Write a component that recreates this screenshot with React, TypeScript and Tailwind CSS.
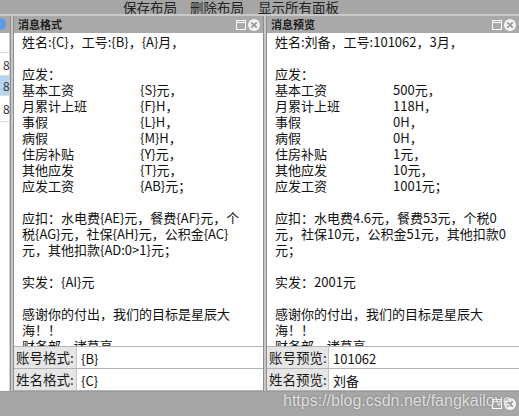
const FONT = "font-['Noto_Sans_CJK_SC','Noto_Sans',sans-serif]";

type Row = { a: string; b?: string };

const formatLines: Row[] = [
  { a: "姓名:{C}，工号:{B}，{A}月，" },
  { a: "" },
  { a: "应发：" },
  { a: "基本工资", b: "{S}元，" },
  { a: "月累计上班", b: "{F}H，" },
  { a: "事假", b: "{L}H，" },
  { a: "病假", b: "{M}H，" },
  { a: "住房补贴", b: "{Y}元，" },
  { a: "其他应发", b: "{T}元，" },
  { a: "应发工资", b: "{AB}元；" },
  { a: "" },
  { a: "应扣：水电费{AE}元，餐费{AF}元，个" },
  { a: "税{AG}元，社保{AH}元，公积金{AC}" },
  { a: "元，其他扣款{AD:0>1}元；" },
  { a: "" },
  { a: "实发：{AI}元" },
  { a: "" },
  { a: "感谢你的付出，我们的目标是星辰大" },
  { a: "海！！" },
  { a: "财务部 – 诸葛亮" },
];

const previewLines: Row[] = [
  { a: "姓名:刘备，工号:101062，3月，" },
  { a: "" },
  { a: "应发：" },
  { a: "基本工资", b: "500元，" },
  { a: "月累计上班", b: "118H，" },
  { a: "事假", b: "0H，" },
  { a: "病假", b: "0H，" },
  { a: "住房补贴", b: "1元，" },
  { a: "其他应发", b: "10元，" },
  { a: "应发工资", b: "1001元；" },
  { a: "" },
  { a: "应扣：水电费4.6元，餐费53元，个税0" },
  { a: "元，社保10元，公积金51元，其他扣款0" },
  { a: "元；" },
  { a: "" },
  { a: "实发：2001元" },
  { a: "" },
  { a: "感谢你的付出，我们的目标是星辰大" },
  { a: "海！！" },
  { a: "财务部 – 诸葛亮" },
];

function TitleIcons() {
  return (
    <div className="flex items-center gap-[2px]">
      <svg width="10" height="10" viewBox="0 0 10 10" aria-hidden="true">
        <rect x="0.5" y="0.5" width="9" height="9" fill="none" stroke="#fff" strokeWidth="1" />
        <line x1="0.5" y1="2.5" x2="9.5" y2="2.5" stroke="#fff" strokeWidth="1" />
      </svg>
      <svg width="12" height="12" viewBox="0 0 12 12" aria-hidden="true">
        <circle cx="6" cy="6" r="6" fill="#f4f4f4" />
        <path d="M3.8 3.8l4.4 4.4M8.2 3.8l-4.4 4.4" stroke="#9a9a9a" strokeWidth="1.8" strokeLinecap="round" />
      </svg>
    </div>
  );
}

function Panel({
  title,
  lines,
  fields,
  labelW,
}: {
  title: string;
  lines: Row[];
  fields: { label: string; value: string }[];
  labelW: string;
}) {
  return (
    <div className="flex-1 min-w-0 flex flex-col">
      <div className="h-[17px] flex items-center justify-between pl-[4px] pr-[3px] bg-[#a9a9a9]">
        <span className="text-[11px] font-bold text-[#1c1c1c] leading-none">{title}</span>
        <TitleIcons />
      </div>
      <div className="flex-1 bg-white overflow-hidden pl-[8px] pt-[1px] text-[13px] leading-[16px] text-[#111]">
        {lines.map((l, i) => (
          <div key={i} className="flex whitespace-nowrap h-[16px]">
            {l.b ? (
              <>
                <span className="w-[118px] shrink-0">{l.a}</span>
                <span>{l.b}</span>
              </>
            ) : (
              <span>{l.a}</span>
            )}
          </div>
        ))}
      </div>
      {fields.map((f) => (
        <div key={f.label} className="h-[22px] flex border-t border-[#b4b4b4] bg-[#e6e6e6]">
          <div className={`${labelW} shrink-0 pl-[2px] text-[13.5px] leading-[20px] text-[#1a1a1a]`}>
            {f.label}
          </div>
          <div className="flex-1 bg-white border-l border-[#c4c4c4] pl-[4px] pt-[2px] text-[13px] leading-[20px] text-[#111]">
            {f.value}
          </div>
        </div>
      ))}
      <div className="h-[1px] bg-[#b4b4b4]" />
    </div>
  );
}

function LeftStrip() {
  return (
    <div className="w-[10px] shrink-0 flex flex-col overflow-hidden">
      <div className="h-[17px] bg-[#a9a9a9] relative">
        <div className="absolute left-[-6px] top-[2px] w-[12px] h-[12px] rounded-full bg-[#5b9bea]" />
      </div>
      <div className="flex-1 bg-white border-r border-[#cfcfcf] text-[12px] text-[#333] leading-[20px]">
        <div className="h-[20px] border-b border-[#dcdcdc]" />
        <div className="h-[23px] border-b border-[#dcdcdc] pt-[2px] pl-[3px]">8</div>
        <div className="h-[20px] bg-[#b5d3f3] border-b border-[#dcdcdc] pl-[3px]">8</div>
        <div className="h-[26px] border-b border-[#dcdcdc] pt-[3px] pl-[3px]">8</div>
      </div>
    </div>
  );
}

function Divider() {
  return (
    <div className="w-[4px] shrink-0 flex">
      <div className="w-[1px] bg-[#8e8e8e]" />
      <div className="w-[2px] bg-[#c8c8c8]" />
      <div className="w-[1px] bg-[#8e8e8e]" />
    </div>
  );
}

export default function App() {
  return (
    <div className={`${FONT} w-[519px] h-[416px] bg-[#a6a6a6] flex flex-col overflow-hidden`}>
      <div className="h-[14px] flex items-center pl-[123px] text-[13.5px] leading-[14px] text-[#222] whitespace-nowrap">
        <span className="w-[67px] shrink-0">保存布局</span>
        <span className="w-[68px] shrink-0">删除布局</span>
        <span>显示所有面板</span>
      </div>
      <div className="h-[2px] bg-[#c9c9c9]" />
      <div className="h-[375px] flex">
        <LeftStrip />
        <Divider />
        <div className="w-[249px] shrink-0 flex">
          <Panel
            title="消息格式"
            lines={formatLines}
            labelW="w-[62px]"
            fields={[
              { label: "账号格式:", value: "{B}" },
              { label: "姓名格式:", value: "{C}" },
            ]}
          />
        </div>
        <Divider />
        <Panel
          title="消息预览"
          lines={previewLines}
          labelW="w-[61px]"
          fields={[
            { label: "账号预览:", value: "101062" },
            { label: "姓名预览:", value: "刘备" },
          ]}
        />
      </div>
      <div className="flex-1 flex items-center justify-end pr-[3px] relative border-t border-[#9a9a9a]">
        <span className="absolute left-[283px] top-[-3px] font-['Liberation_Sans',sans-serif] text-[16px] text-white/75 [text-shadow:0_0_2px_rgba(0,0,0,0.35)]">
          https://blog.csdn.net/fangkailove
        </span>
        <TitleIcons />
      </div>
    </div>
  );
}
